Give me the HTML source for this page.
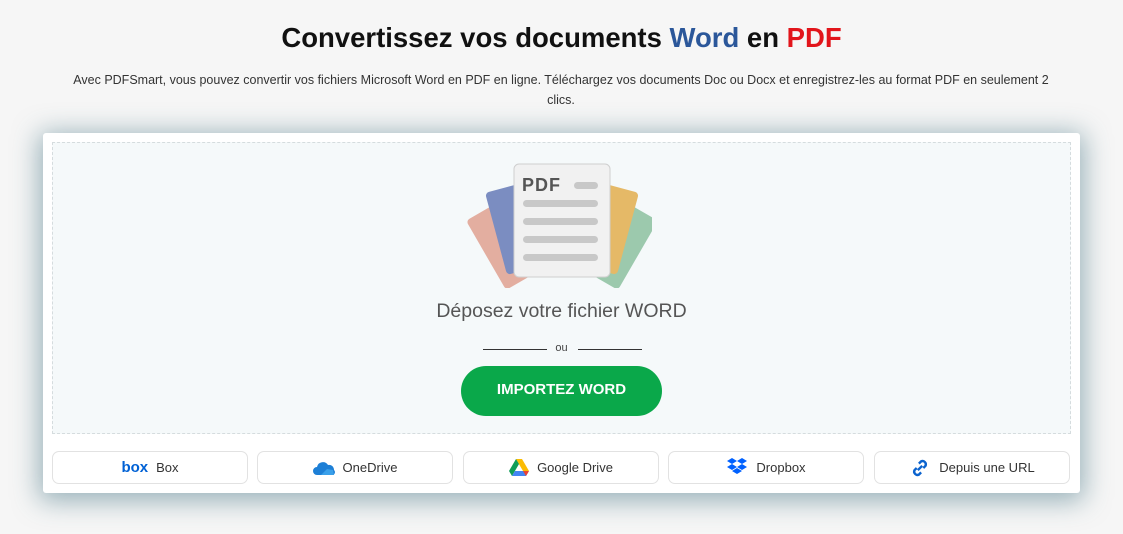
<!DOCTYPE html>
<html><head><meta charset="utf-8"><style>
body{margin:0;background:#f6f6f6;font-family:"Liberation Sans",sans-serif;width:1123px;height:534px;overflow:hidden;position:relative}
h1{position:absolute;top:22px;left:0;width:1123px;text-align:center;margin:0;font-size:27.5px;font-weight:bold;color:#111}
.sub{position:absolute;top:70px;left:61px;width:1000px;text-align:center;font-size:12.5px;line-height:20px;color:#333}
.card{position:absolute;left:43px;top:133px;width:1037px;height:360px;background:#fff;border-radius:3px;box-shadow:0 4px 26px 4px rgba(60,110,125,.5)}
.drop{position:absolute;left:9px;top:9px;width:1017px;height:290px;background:#f5f9fa;border:1px dashed #d5dcde}
.dt{position:absolute;top:157px;width:100%;text-align:center;font-size:19.5px;color:#555}
.ou{position:absolute;top:199px;width:100%;text-align:center;font-size:11px;color:#444}
.ln{position:absolute;top:206px;height:1px;width:64px;background:#333}
.btn{position:absolute;left:408px;top:223px;width:201px;height:50px;border-radius:25px;background:#0aa84a;color:#fff;font-weight:bold;font-size:15px;line-height:48px;text-align:center}
.s{position:absolute;top:318px;width:194px;height:31px;border:1px solid #e2e2e2;border-radius:7px;background:#fff;display:flex;align-items:center;justify-content:center;font-size:13px;color:#333;gap:8px}
</style></head><body>
<h1>Convertissez vos documents <span style="color:#2b579a">Word</span> en <span style="color:#e2151b">PDF</span></h1>
<div class="sub">Avec PDFSmart, vous pouvez convertir vos fichiers Microsoft Word en PDF en ligne. Téléchargez vos documents Doc ou Docx et enregistrez-les au format PDF en seulement 2<br>clics.</div>
<div class="card">
<div class="drop">
<svg style="position:absolute;left:409px;top:20px" width="190" height="125" viewBox="0 0 190 125">
<g transform="rotate(-30 70 112)"><rect x="40" y="32" width="60" height="80" rx="4" fill="#e3aea0"/></g>
<g transform="rotate(-15 72 112)"><rect x="46" y="20" width="60" height="85" rx="4" fill="#7b8dc1"/></g>
<g transform="rotate(30 130 112)"><rect x="100" y="32" width="60" height="80" rx="4" fill="#9cc9ad"/></g>
<g transform="rotate(15 128 112)"><rect x="94" y="20" width="60" height="85" rx="4" fill="#e5b967"/></g>
<rect x="52" y="1" width="96" height="113" rx="5" fill="#f1f1f1" stroke="#cfcfcf"/>
<text x="60" y="28" font-family="Liberation Sans" font-weight="bold" font-size="18" fill="#555" letter-spacing="1">PDF</text>
<rect x="112" y="19" width="24" height="7" rx="3.5" fill="#c8c8c8"/>
<rect x="61" y="37" width="75" height="7" rx="3.5" fill="#c8c8c8"/>
<rect x="61" y="55" width="75" height="7" rx="3.5" fill="#c8c8c8"/>
<rect x="61" y="73" width="75" height="7" rx="3.5" fill="#c8c8c8"/>
<rect x="61" y="91" width="75" height="7" rx="3.5" fill="#c8c8c8"/>
</svg>
<div class="dt">Déposez votre fichier WORD</div>
<div class="ln" style="left:430px"></div><div class="ou">ou</div><div class="ln" style="left:525px"></div>
<div class="btn">IMPORTEZ WORD</div>
</div>
<div class="s" style="left:9px"><span style="color:#0061d5;font-weight:bold;font-size:15px">box</span>Box</div>
<div class="s" style="left:214px"><svg width="22" height="14" viewBox="0 0 22 14"><path d="M4 14a4 4 0 010-8 6 6 0 0111-2 5 5 0 016 5 3 3 0 01-1 5z" fill="#1d7fd6"/><path d="M8 14l6-6 6 1 1 5z" fill="#3aa0ea"/></svg>OneDrive</div>
<div class="s" style="left:420px"><svg width="20" height="18" viewBox="0 0 20 18"><path d="M7 0h6l7 12h-6z" fill="#fbbc04"/><path d="M7 0l3 5-7 12-3-5z" fill="#0f9d58"/><path d="M3 17l3-5h14l-3 5z" fill="#4285f4"/><path d="M14 12h6l-3 5z" fill="#ea4335"/></svg>Google Drive</div>
<div class="s" style="left:625px"><svg width="22" height="20" viewBox="0 0 22 20"><path d="M6 0l5 3-5 3-5-3zM16 0l5 3-5 3-5-3zM1 9l5-3 5 3-5 3zM11 9l5-3 5 3-5 3zM6 13l5-3 5 3-5 3z" fill="#0061ff"/></svg>Dropbox</div>
<div class="s" style="left:831px"><svg width="22" height="22" viewBox="0 0 20 20" fill="none" stroke="#0b63ce" stroke-width="2.2"><path d="M8 12l4-4"/><path d="M9 6l2-2a3 3 0 014 4l-2 2"/><path d="M11 14l-2 2a3 3 0 01-4-4l2-2"/></svg>Depuis une URL</div>
</div>
</body></html>
